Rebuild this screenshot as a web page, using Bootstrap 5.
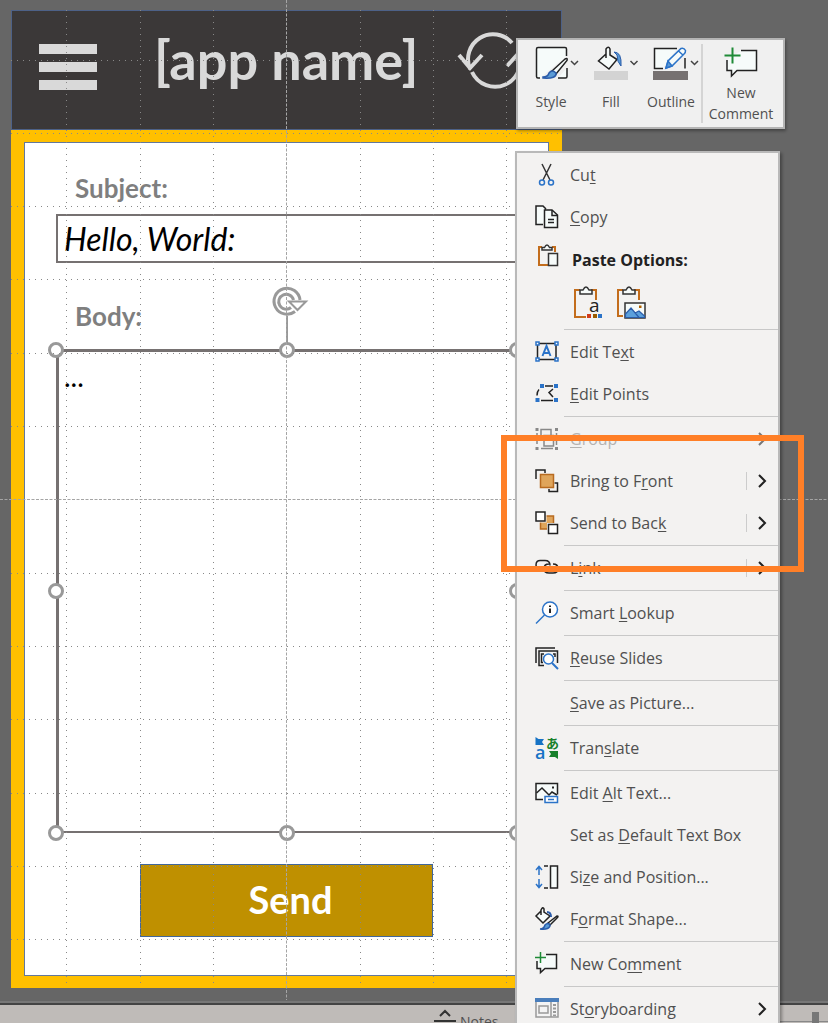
<!DOCTYPE html>
<html lang="en">
<head>
<meta charset="utf-8">
<meta name="viewport" content="width=device-width, initial-scale=1">
<title>Slide editor</title>
<link href="https://cdn.jsdelivr.net/npm/bootstrap@5.3.0/dist/css/bootstrap.min.css" rel="stylesheet">
<style>
  body { background: #666; font-family: "Open Sans", "Noto Sans", sans-serif; color: #505050; }
  button { font: inherit; color: inherit; background: none; border: 0; padding: 0; }
  svg { display: block; flex: none; fill: none; overflow: visible; }

  /* slide */
  .stage { padding: 10px 0 12px 11px; min-height: 0; }
  .slide { max-width: 551px; font-family: Lato, sans-serif; }
  .app-bar { height: 120px; padding: 0 0 20px 27px; gap: 57px; background: #3b3838; border: 1px solid #4d6187; color: #d9d9d9; }
  .app-title { font-size: 54px; line-height: 64px; font-weight: 700; margin: 0; }
  .burger { width: 58px; gap: 8px; padding-top: 14px; }
  .burger span { height: 10px; background: #d9d9d9; }
  .app-frame { border: 12px solid #ffc000; border-left-width: 13px; border-right-width: 13px; }
  .app-panel { background: #fff; border: 1px solid #62789c; padding: 27px 31px 38px; }
  .field-label { font-size: 26px; line-height: 36px; font-weight: 700; color: #7f7f7f; margin-left: 19px; }
  .field { display: block; width: 100%; border: 2px solid #767171; border-radius: 0; background: #fff; color: #000; font-size: 28px; padding: 0 6px; resize: none; outline: 0; }
  .subject { height: 49px; margin: 8px 0 35px; font-style: italic; font-size: 32px; }
  .body-box { margin: 15px 0 31px; }
  .body-box .field { height: 484px; border-top-width: 3px; border-left-width: 3px; line-height: 48px; padding-left: 5px; overflow: hidden; }
  .send { width: 293px; height: 73px; margin: 0 auto; padding: 0 0 2px 8px; background: #bf9000; border: 1px solid #41679c; color: #fff; font-size: 38px; font-weight: 700; }
  .handle { position: absolute; width: 16px; height: 16px; border: 3px solid #999; border-radius: 50%; background: #fff; transform: translate(-50%, -50%); }
  .rotate { position: absolute; left: 50%; top: -63px; margin-left: -17px; }
  .grid-lines { position: absolute; inset: 0; width: 100%; height: 100%; pointer-events: none; }

  /* status bar */
  .status { height: 20px; background: #bfbbb8; border-top: 2px solid #444; font-size: 14px; box-shadow: 0 -2px #777; }
  .status-row { height: 32px; padding-left: 434px; }
  .zoom-range { appearance: none; width: 52px; height: 32px; background: linear-gradient(#888, #888) center / 100% 1px no-repeat; }
  .zoom-range::-webkit-slider-thumb { appearance: none; width: 7px; height: 18px; background: #777; }

  /* floating tools */
  .mini-bar { position: absolute; left: 516px; top: 38px; width: 269px; height: 91px; padding: 4px 3px; background: #f0f0f0; border: 2px solid #b4b4b4; font-size: 14px; line-height: 21px; box-shadow: 1px 2px 3px #0005; }
  .mini-bar button { width: 60px; display: flex; flex-direction: column; align-items: center; }
  .mini-bar .wide { width: 78px; padding-top: 2px; border-left: 2px solid #d4d4d4; }
  .mini-label { margin-top: 11px; }
  .ctx { position: absolute; left: 515px; top: 151px; width: 265px; padding: 1px 0; background: #f3f2f1; border: 2px solid #b9b9b9; font-size: 16px; box-shadow: 2px 2px 3px #0005; }
  .ctx-item { height: 42px; width: 100%; padding: 0 11px 0 18px; gap: 11px; text-align: left; }
  .ctx-item:hover, .mini-bar button:hover { background: #e1dfdd; }
  .ctx-head { height: 44px; gap: 13px; color: #222; font-weight: 700; }
  .ctx-head svg { margin-bottom: 8px; }
  .ctx-paste { height: 46px; padding: 0 0 6px 56px; gap: 13px; }
  .ctx-rule { height: 1px; margin: 1px 0 1px 47px; background: #c8c8c8; }
  .ctx-icon { width: 24px; flex: none; }
  .ctx-arrow { margin-left: auto; }
  .split { border-left: 1px solid #ccc; padding-left: 10px; }
  .muted { color: #b5b3b1; }
  u { text-underline-offset: 2px; text-decoration-thickness: 1px; }
  .callout { position: absolute; left: 501px; top: 435px; width: 303px; height: 137px; border: 6px solid #ff7f27; pointer-events: none; }
</style>
</head>
<body>
<div class="vh-100 d-flex flex-column position-relative overflow-hidden">
  <main class="stage flex-grow-1">
    <div class="slide position-relative">
      <header class="app-bar d-flex align-items-center">
        <button class="burger d-flex flex-column" aria-label="Menu"><span></span><span></span><span></span></button>
        <h1 class="app-title text-nowrap">[app name]</h1>
      </header>
      <div class="app-frame">
        <form class="app-panel d-flex flex-column" onsubmit="return false">
          <label class="field-label" for="subject">Subject:</label>
          <input class="field subject" id="subject" type="text" value="Hello, World:">
          <label class="field-label" for="message">Body:</label>
          <div class="body-box position-relative">
            <textarea class="field" id="message">...</textarea>
            <svg class="rotate" width="40" height="64" viewBox="0 0 40 64" stroke="#999" stroke-width="3"><path d="M17 30v34" stroke-width="2"/><path d="M25 25.500A13 13 0 1 1 30 14" /><path d="M21 21.500A7.500 7.500 0 1 1 23.500 14"/><path d="M19 15.500H36L27.500 24Z" fill="#fff" stroke-width="2"/></svg>
            <span class="handle" style="left:0;top:1px"></span><span class="handle" style="left:50%;top:1px"></span><span class="handle" style="left:100%;top:1px"></span>
            <span class="handle" style="left:0;top:50%"></span><span class="handle" style="left:100%;top:50%"></span>
            <span class="handle" style="left:0;top:100%"></span><span class="handle" style="left:50%;top:100%"></span><span class="handle" style="left:100%;top:100%"></span>
          </div>
          <button class="send">Send</button>
        </form>
      </div>
      <svg class="grid-lines" stroke="#d9d9d9"><g transform="translate(483 50)" stroke-width="4"><path d="M-24 9A25 25 0 0 1 18 -17M24 -9A25 25 0 0 1 -22 12M-35 -5l11 13 12-13M13 6l11-12 11 12"/></g></svg>
      <svg class="grid-lines" stroke="#888" stroke-dasharray="1 5"><path d="M55.500 0V978M129.500 0V978M202.500 0V978M349.500 0V978M422.500 0V978M495.500 0V978M0 50.500H551M0 123.500H551M0 196.500H551M0 269.500H551M0 343.500H551M0 416.500H551M0 563.500H551M0 636.500H551M0 709.500H551M0 783.500H551M0 856.500H551M0 929.500H551"/></svg>
    </div>
  </main>
  <footer class="status overflow-hidden flex-shrink-0">
    <div class="status-row d-flex align-items-center">
      <button class="d-flex align-items-center gap-1" type="button"><svg width="22" height="20" viewBox="0 0 22 20" stroke="#333" stroke-width="2"><path d="M0 10h22M6 5l5-5 5 5M3 15h16"/></svg>Notes</button>
      <input class="zoom-range ms-auto" type="range" value="80" aria-label="Zoom">
    </div>
  </footer>
  <svg class="grid-lines" stroke="#a5a5a5" stroke-dasharray="3 1.500"><path d="M286.500 0V1000M0 499.500H828"/></svg>

  <div class="mini-bar d-flex" role="toolbar" aria-label="Shape formatting">
    <button type="button"><svg width="60" height="36" viewBox="0 0 60 36" stroke="#222" stroke-width="1.500"><path d="M19 34H17q-1.500 0-1.500-1.500V5q0-1.500 1.500-1.500H44q1.500 0 1.500 1.500v7M46 24v8.500q0 1.500-1.500 1.500H37" fill="#f6fbfa"/><path d="M31 27L44 15q3-1.500 2 1.500L35 30Z" fill="#f6fbfa"/><path d="M22 33q5 0 6-4 3-4 7 0 1 6-13 5Z" fill="#5b9bd5" stroke="#2a5caa"/><path d="M50 17l3.500 3.500L57 17" stroke="#444"/></svg><span class="mini-label">Style</span></button>
    <button type="button"><svg width="60" height="36" viewBox="0 0 60 36" stroke="#222" stroke-width="1.500"><path d="M13 27h34v9H13Z" fill="#d3d3d3" stroke="none"/><path d="M25 10L17.500 17 28 25l8-9.500L29 11V5q-1.500-3.500-4 0v9" fill="#f6fbfa"/><path d="M33 8q8 0 7 14-4-4-4-11Z" fill="#5b9bd5" stroke="#2a5caa" stroke-width="1"/><path d="M49.500 17l3.500 3.500L56.500 17" stroke="#444"/></svg><span class="mini-label">Fill</span></button>
    <button type="button"><svg width="60" height="36" viewBox="0 0 60 36" stroke="#222" stroke-width="1.500"><path d="M12 27h35v9H12Z" fill="#767171" stroke="none"/><path d="M36 4.500H13.500V24.500H22M44 14v10.500" fill="#f6fbfa"/><path d="M25 24l2-7L40 4.500q3-1 4.500 2 0 2-1 3L31 22ZM37.500 7l5 4.500" fill="#f6fbfa" stroke="#2b73c8"/><path d="M25 24l2-7 4 5Z" fill="#5b9bd5" stroke="#2b73c8"/><path d="M50 17l3.500 3.500L57 17" stroke="#444"/></svg><span class="mini-label">Outline</span></button>
    <button type="button" class="wide"><svg width="34" height="36" viewBox="0 0 34 36" stroke="#222" stroke-width="1.500"><path d="M17 4.500H32.500V24.500H13L7.500 30V24.500H3V14" fill="#f6fbfa"/><path d="M8.500 1.500v16M.500 9.500h16" stroke="#1e8a37" stroke-width="2"/></svg><span>New<br>Comment</span></button>
  </div>

  <nav class="ctx" aria-label="Context menu">
    <button class="ctx-item d-flex align-items-center"><svg width="24" height="24" stroke="#333" stroke-width="1.500"><path d="M7 1l8 16M16 1L8 17"/><g stroke="#2b73c8"><circle cx="7" cy="19.500" r="2.500"/><circle cx="16" cy="19.500" r="2.500"/></g></svg><span>Cu<u>t</u></span></button>
    <button class="ctx-item d-flex align-items-center"><svg width="24" height="24" stroke="#222" stroke-width="1.500"><path d="M8 19.500H1V1h7l3 3M9.500 5H17l5.500 5V22.500H9.500Z" fill="#f6fbfa"/><path d="M17 5v5.500h5.500M13 14.500h6M13 17.500h6"/></svg><span><u>C</u>opy</span></button>
    <div class="ctx-item ctx-head d-flex align-items-center"><svg width="24" height="24" stroke="#333" stroke-width="1.500"><path d="M7 3H4v18h9M17 3h3v5" stroke="#c36d1c" stroke-width="2"/><path d="M7 6V3.500h2.500q2.500-5 5 0H17V6ZM13.500 9.500h9v12h-9Z" fill="#f6fbfa"/></svg><span>Paste Options:</span></div>
    <div class="ctx-paste d-flex align-items-center">
      <button aria-label="Keep text formatting"><svg width="30" height="34" stroke="#333" stroke-width="1.500"><path d="M7 5H2v27h11M18 5h5v10" stroke="#c36d1c" stroke-width="2"/><path d="M7 9V5h3q3-6 6 0h3v4Z" fill="#f6fbfa"/><text x="16" y="27" font-family="Open Sans" font-size="19" fill="#222" stroke="none">a</text><path d="M14 29h4v4h-4Z" fill="#d13b1b" stroke="none"/><path d="M20 29h4v4h-4Z" fill="#9a5b00" stroke="none"/><path d="M25 29h4v4h-4Z" fill="#2b73c8" stroke="none"/></svg></button>
      <button aria-label="Paste as picture"><svg width="30" height="34" stroke="#333" stroke-width="1.500"><path d="M7 5H2v26h5M18 5h5v10" stroke="#c36d1c" stroke-width="2"/><path d="M7 9V5h3q3-6 6 0h3v4Z" fill="#f6fbfa"/><path d="M9 18h20v15H9Z" fill="#f6fbfa"/><path d="M9.500 29l5.500-6 8 9.500M19 28l4-2 5.500 5v1.500h-19V29" fill="#5ba0dc" stroke="#2a5caa" stroke-width="1.200"/><path d="M23 20.500h2.500V23H23Z" fill="#b06000" stroke="none"/></svg></button>
    </div>
    <div class="ctx-rule"></div>
    <button class="ctx-item d-flex align-items-center"><svg width="24" height="24" stroke="#222" stroke-width="1.500"><path d="M2.500 3.500h18.500v16H2.500Z"/><path d="M7.500 16L11.500 6l4 10M9 13h5.500" stroke="#2b73c8" stroke-width="2"/><path d="M1 2h3v3H1ZM20 2h3v3h-3ZM1 18h3v3H1ZM20 18h3v3h-3Z" fill="#fff" stroke="#2b73c8"/></svg><span>Edit Te<u>x</u>t</span></button>
    <button class="ctx-item d-flex align-items-center"><svg width="24" height="24" stroke="#222" stroke-width="1.500"><path d="M10 4h8M4 7.500q-2 2-2 6M6 18.500h12M18 7l-4 3.500 4 4.500"/><path d="M5 2h4v4H5ZM19 2h4v4h-4ZM.500 16h4v4h-4ZM19 16h4v4h-4Z" fill="#2b73c8" stroke="none"/></svg><span><u>E</u>dit Points</span></button>
    <div class="ctx-rule"></div>
    <button class="ctx-item muted d-flex align-items-center"><svg width="24" height="24" stroke="#888" stroke-width="1.500"><path d="M6 2.500h10v10H6ZM9 8.500h9.500v10.500H9ZM2 6v11M6 21.500h12M21.500 6v12"/><path d="M.500 1h3v3h-3ZM20 1h3v3h-3ZM.500 20h3v3h-3ZM20 20h3v3h-3Z" fill="#888" stroke="none"/></svg><span><u>G</u>roup</span><svg class="ctx-arrow" width="10" height="18" stroke="#777" stroke-width="2"><path d="M2 3l6 6-6 6"/></svg></button>
    <button class="ctx-item d-flex align-items-center"><svg width="24" height="24" stroke="#222" stroke-width="1.500"><path d="M1 10V1h9v3M14 20v2.500h8.500V14h-3"/><path d="M5.500 5.500h13v13h-13Z" fill="#dfa55b" stroke="#b86b20"/></svg><span>Bring to F<u>r</u>ont</span><span class="ctx-arrow split"><svg width="10" height="18" stroke="#222" stroke-width="2"><path d="M2 3l6 6-6 6"/></svg></span></button>
    <button class="ctx-item d-flex align-items-center"><svg width="24" height="24" stroke="#222" stroke-width="1.500"><path d="M5.500 5h13v13h-13Z" fill="#dfa55b" stroke="#b86b20"/><path d="M-1-1h12.500v12.500H-1ZM12 12h12v12H12Z" fill="#f3f2f1" stroke="none"/><path d="M1 1h9v9H1ZM13.500 13.500h9v9h-9Z" fill="#fff"/></svg><span>Send to Bac<u>k</u></span><span class="ctx-arrow split"><svg width="10" height="18" stroke="#222" stroke-width="2"><path d="M2 3l6 6-6 6"/></svg></span></button>
    <div class="ctx-rule"></div>
    <button class="ctx-item d-flex align-items-center"><svg width="24" height="24" stroke="#222" stroke-width="1.500"><path d="M8 14H6Q1 14 1 9T6 4.500h4q5 0 5 5M18 8q5 0 5 4.500T18 17h-4q-5 0-5-4.500Q9 8 14 8"/></svg><span>L<u>i</u>nk</span><span class="ctx-arrow split"><svg width="10" height="18" stroke="#222" stroke-width="2"><path d="M2 3l6 6-6 6"/></svg></span></button>
    <div class="ctx-rule"></div>
    <button class="ctx-item d-flex align-items-center"><svg width="24" height="24" stroke="#2b73c8" stroke-width="1.500"><circle cx="15" cy="8.500" r="7.500" fill="#fff"/><path d="M9.500 14L1 22.500"/><path d="M15 7.500V12M15 4.500v1.500" stroke="#222" stroke-width="2"/></svg><span>Smart <u>L</u>ookup</span></button>
    <div class="ctx-rule"></div>
    <button class="ctx-item d-flex align-items-center"><svg width="24" height="24" stroke="#222" stroke-width="1.500"><path d="M1 17V2h19M9 19.500H4V5h18.500v12M8 16.500H6.500V8H9M18 8h2v3"/><circle cx="13.500" cy="13" r="5" stroke="#2b73c8" fill="#fff"/><path d="M17 17l6 6" stroke="#2b73c8" stroke-width="2"/></svg><span><u>R</u>euse Slides</span></button>
    <div class="ctx-rule"></div>
    <button class="ctx-item d-flex align-items-center"><span class="ctx-icon"></span><span><u>S</u>ave as Picture...</span></button>
    <div class="ctx-rule"></div>
    <button class="ctx-item d-flex align-items-center"><svg width="24" height="24"><path d="M.500 1l3 2H9L7 6l2 3H.500Z" fill="#1673c5"/><path d="M23 23l-3-2h-6l2-3-2-3h9Z" fill="#17802a"/><text x="0" y="23" font-family="Open Sans" font-size="18" font-weight="600" fill="#1673c5">a</text><text x="11" y="12" font-family="Noto Sans CJK JP" font-size="13" font-weight="700" fill="#17802a">あ</text></svg><span>Tran<u>s</u>late</span></button>
    <div class="ctx-rule"></div>
    <button class="ctx-item d-flex align-items-center"><svg width="24" height="24" stroke="#222" stroke-width="1.500"><path d="M8 18.500H1V2.500h21.500v11" fill="#f6fbfa"/><path d="M1.500 12L7 7l7 7 3-3 5 3"/><path d="M17 5.500h2v2h-2Z" fill="#222" stroke="none"/><path d="M10 15.500h12.500v6H10Z" fill="#fff" stroke="#2b73c8"/><path d="M13 18.500h6" stroke="#2b73c8"/></svg><span>Edit <u>A</u>lt Text...</span></button>
    <button class="ctx-item d-flex align-items-center"><span class="ctx-icon"></span><span class="text-nowrap">Set as <u>D</u>efault Text Box</span></button>
    <button class="ctx-item d-flex align-items-center"><svg width="24" height="24" stroke="#2b73c8" stroke-width="1.500"><path d="M4 10V2M1 5l3-3.500L7 5M4 14v8M1 19l3 3.500L7 19"/><path d="M9 1h4M9 23h4M15.500 1h7v22h-7Z" fill="#f6fbfa" stroke="#222"/></svg><span>Si<u>z</u>e and Position...</span></button>
    <button class="ctx-item d-flex align-items-center"><svg width="24" height="24" stroke="#222" stroke-width="1.500"><path d="M6 4L1 9l7 7 7-7-6-4V2Q8-1 6 3v5" fill="#f6fbfa"/><path d="M12 5q4 0 4 5" stroke="#2a5caa" stroke-width="2"/><path d="M13 16l9-7q2 0 0 2l-7 7Z" fill="#f6fbfa"/><path d="M5 22q4 0 5-4 3-3 5 0 0 5-10 4Z" fill="#5b9bd5" stroke="#2a5caa"/></svg><span>F<u>o</u>rmat Shape...</span></button>
    <div class="ctx-rule"></div>
    <button class="ctx-item d-flex align-items-center"><svg width="24" height="24" stroke="#222" stroke-width="1.500"><path d="M11 2.500h10.500V16.500H10L5.500 20.500V16.500H2V9" fill="#f6fbfa"/><path d="M5.500 0v11M0 5.500h11" stroke="#1e8a37"/></svg><span>New Co<u>m</u>ment</span></button>
    <div class="ctx-rule"></div>
    <button class="ctx-item d-flex align-items-center"><svg width="24" height="24" stroke="#999" stroke-width="1.500"><path d="M1 2h22v18H1Z" fill="#f4f4f4"/><path d="M0 1h24v4H0Z" fill="#4a7ebb" stroke="none"/><path d="M4 9h9v7H4ZM16 5v15"/><path d="M19.500 7v12" stroke-dasharray="2 1.500" stroke-width="3"/></svg><span>St<u>o</u>ryboarding</span><svg class="ctx-arrow" width="10" height="18" stroke="#222" stroke-width="2"><path d="M2 3l6 6-6 6"/></svg></button>
  </nav>
  <div class="callout"></div>
</div>
<script src="https://cdn.jsdelivr.net/npm/bootstrap@5.3.0/dist/js/bootstrap.bundle.min.js"></script>
</body>
</html>
